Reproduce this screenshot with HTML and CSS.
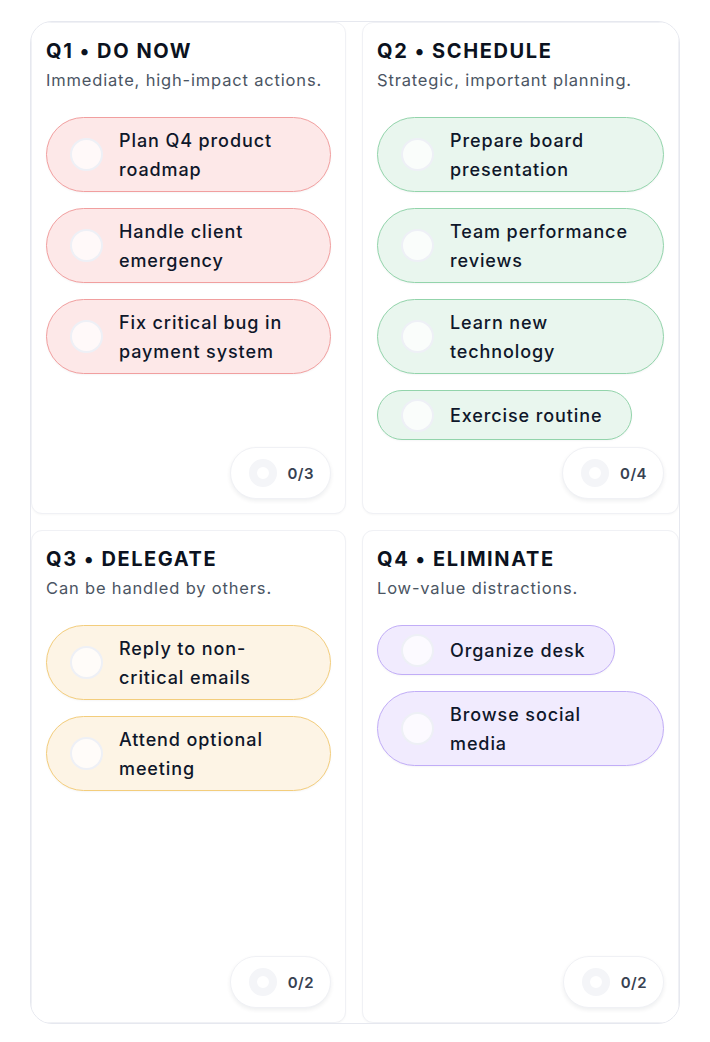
FILE: index.html
```html
<!DOCTYPE html>
<html lang="en">
<head>
<meta charset="utf-8">
<title>Eisenhower Matrix</title>
<link rel="stylesheet" href="styles.css">
</head>
<body>
<div class="matrix">
  <section class="quad">
    <h2 class="quad-title">Q1 • DO NOW</h2>
    <p class="quad-sub">Immediate, high-impact actions.</p>
    <ul class="tasks">
      <li class="task task-red"><span class="check"></span><span class="task-text">Plan Q4 product roadmap</span></li>
      <li class="task task-red"><span class="check"></span><span class="task-text">Handle client emergency</span></li>
      <li class="task task-red"><span class="check"></span><span class="task-text">Fix critical bug in payment system</span></li>
    </ul>
    <div class="count"><span class="ring"></span><span class="count-text">0/3</span></div>
  </section>
  <section class="quad">
    <h2 class="quad-title">Q2 • SCHEDULE</h2>
    <p class="quad-sub">Strategic, important planning.</p>
    <ul class="tasks">
      <li class="task task-green"><span class="check"></span><span class="task-text">Prepare board presentation</span></li>
      <li class="task task-green"><span class="check"></span><span class="task-text">Team performance reviews</span></li>
      <li class="task task-green"><span class="check"></span><span class="task-text">Learn new technology</span></li>
      <li class="task task-green"><span class="check"></span><span class="task-text">Exercise routine</span></li>
    </ul>
    <div class="count"><span class="ring"></span><span class="count-text">0/4</span></div>
  </section>
  <section class="quad">
    <h2 class="quad-title">Q3 • DELEGATE</h2>
    <p class="quad-sub">Can be handled by others.</p>
    <ul class="tasks">
      <li class="task task-yellow"><span class="check"></span><span class="task-text">Reply to non-critical emails</span></li>
      <li class="task task-yellow"><span class="check"></span><span class="task-text">Attend optional meeting</span></li>
    </ul>
    <div class="count"><span class="ring"></span><span class="count-text">0/2</span></div>
  </section>
  <section class="quad">
    <h2 class="quad-title">Q4 • ELIMINATE</h2>
    <p class="quad-sub">Low-value distractions.</p>
    <ul class="tasks">
      <li class="task task-purple"><span class="check"></span><span class="task-text">Organize desk</span></li>
      <li class="task task-purple"><span class="check"></span><span class="task-text">Browse social media</span></li>
    </ul>
    <div class="count"><span class="ring"></span><span class="count-text">0/2</span></div>
  </section>
</div>
</body>
</html>
```
FILE: styles.css
```css
* { box-sizing: border-box; }

body {
  margin: 0;
  background: #ffffff;
  font-family: Inter, "Noto Sans", "Liberation Sans", sans-serif;
  color: #0b1220;
}

.matrix {
  width: 650px;
  height: 1003px;
  margin: 21px 30px 0;
  border: 1px solid #e6e8ef;
  border-radius: 22px;
  overflow: hidden;
  display: grid;
  grid-template-columns: 315px 1fr;
  grid-template-rows: 492px 1fr;
  gap: 16px;
  background: #ffffff;
}

.quad {
  position: relative;
  border: 1px solid #f0f1f5;
  border-radius: 11px;
  padding: 14px;
  background: #ffffff;
  box-shadow: 0 1px 2px rgba(15, 23, 42, 0.03);
}

.quad-title {
  margin: 0;
  font-size: 20px;
  line-height: 28px;
  font-weight: 700;
  letter-spacing: 0.08em;
  color: #0b1220;
}

.quad-sub {
  margin: 3px 0 0;
  font-size: 16.5px;
  line-height: 24px;
  color: #4b5563;
  letter-spacing: 0.05em;
}

.tasks {
  list-style: none;
  margin: 25px 0 0;
  padding: 0;
  display: flex;
  flex-direction: column;
  gap: 16px;
}

.task {
  display: flex;
  align-items: center;
  gap: 16px;
  width: fit-content;
  max-width: 100%;
  padding: 7.5px 29px 7.5px 23px;
  border: 1.5px solid;
  border-radius: 999px;
  box-shadow: 0 1px 2px rgba(15, 23, 42, 0.04);
}

.check {
  flex: none;
  width: 33px;
  height: 33px;
  border-radius: 50%;
  border: 2px solid #eef0f6;
  background: rgba(255, 255, 255, 0.75);
}

.task-text {
  font-size: 18px;
  line-height: 29px;
  font-weight: 500;
  color: #0f172a;
  letter-spacing: 0.05em;
}

.task-red { background: #fde8e8; border-color: #f19f9f; }
.task-green { background: #e9f6ee; border-color: #93d4ab; }
.task-yellow { background: #fdf4e5; border-color: #f3cd7c; }
.task-purple { background: #f1ebfe; border-color: #c1adf7; }

.count {
  position: absolute;
  right: 14px;
  bottom: 14px;
  height: 52px;
  display: flex;
  align-items: center;
  gap: 11px;
  padding: 0 16px 0 18px;
  background: #ffffff;
  border: 1px solid #f0f1f5;
  border-radius: 999px;
  box-shadow: 0 2px 4px rgba(15, 23, 42, 0.07);
}

.ring {
  width: 28px;
  height: 28px;
  border-radius: 50%;
  border: 8px solid #f4f5f8;
}

.count-text {
  font-size: 15px;
  font-weight: 600;
  color: #374151;
  letter-spacing: 0.03em;
}
```
